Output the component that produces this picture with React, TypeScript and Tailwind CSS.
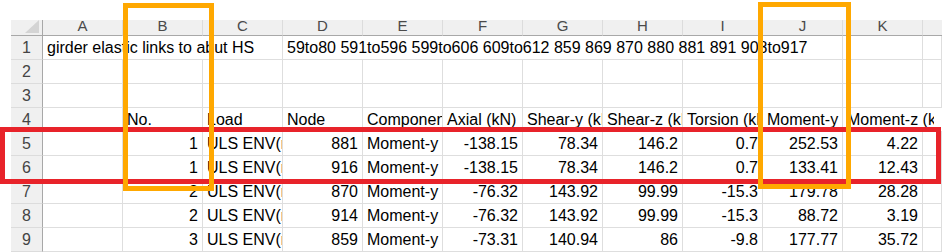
import React from "react";

type Row = {
  num: number;
  cells: (string | null)[];
};

// columns B..K ; numbers right aligned, text left aligned
const dataRows: Row[] = [
  { num: 5, cells: ["1", "ULS ENV(max)", "881", "Moment-y", "-138.15", "78.34", "146.2", "0.7", "252.53", "4.22"] },
  { num: 6, cells: ["1", "ULS ENV(max)", "916", "Moment-y", "-138.15", "78.34", "146.2", "0.7", "133.41", "12.43"] },
  { num: 7, cells: ["2", "ULS ENV(max)", "870", "Moment-y", "-76.32", "143.92", "99.99", "-15.3", "179.78", "28.28"] },
  { num: 8, cells: ["2", "ULS ENV(max)", "914", "Moment-y", "-76.32", "143.92", "99.99", "-15.3", "88.72", "3.19"] },
  { num: 9, cells: ["3", "ULS ENV(max)", "859", "Moment-y", "-73.31", "140.94", "86", "-9.8", "177.77", "35.72"] },
];

const headers = ["No.", "Load", "Node", "Component", "Axial (kN)", "Shear-y (kN)", "Shear-z (kN)", "Torsion (kNm)", "Moment-y (kNm)"];
const letters = ["A", "B", "C", "D", "E", "F", "G", "H", "I", "J", "K"];

const isNumber = (v: string) => /^-?\d+(\.\d+)?$/.test(v);

function RowHead({ n }: { n: number }) {
  return (
    <div className="h-6 bg-[#f0f0f0] border-r border-r-[#a8a8a8] border-b border-b-[#dcdcdc] text-center leading-[24px] text-[16px] text-[#444]">
      {n}
    </div>
  );
}

function Cell({ value, span }: { value?: string | null; span?: string }) {
  const right = value ? isNumber(value) : false;
  return (
    <div
      className={`h-6 border-r border-b border-[#dedede] px-1 leading-[24px] text-[16px] text-black whitespace-nowrap overflow-hidden ${right ? "text-right" : "text-left"} ${span ?? ""}`}
    >
      {value}
    </div>
  );
}

export default function App() {
  return (
    <div className="relative w-[942px] h-[252px] overflow-hidden bg-white font-['Liberation_Sans',Arial,sans-serif]">
      <div className="pl-[11px] pt-[20px]">
        {/* column headers */}
        <div className="grid grid-cols-[32px_repeat(11,80px)_1fr]">
          <div className="relative h-4 bg-[#f0f0f0] border-r border-r-[#a8a8a8] border-b border-b-[#a8a8a8]">
            <svg className="absolute right-[3px] bottom-[2px]" width="14" height="13" viewBox="0 0 14 13">
              <polygon points="14,0 14,13 0,13" fill="#d4d4d4" />
            </svg>
          </div>
          {letters.map((l) => (
            <div
              key={l}
              className="h-4 bg-[#f0f0f0] border-r border-r-[#dcdcdc] border-b border-b-[#a8a8a8] text-center leading-[12px] text-[15px] text-[#4a4a4a]"
            >
              {l}
            </div>
          ))}
          <div className="h-4 bg-[#f0f0f0] border-b border-b-[#a8a8a8]" />
        </div>

        {/* row 1 */}
        <div className="grid grid-cols-[32px_repeat(11,80px)_1fr]">
          <RowHead n={1} />
          <Cell value="girder elastic links to abut HS" span="col-span-3" />
          <Cell value="59to80 591to596 599to606 609to612 859 869 870 880 881 891 908to917" span="col-span-7" />
          <Cell />
          <Cell />
        </div>

        {[2, 3].map((n) => (
          <div key={n} className="grid grid-cols-[32px_repeat(11,80px)_1fr]">
            <RowHead n={n} />
            {letters.map((l) => (
              <Cell key={l} />
            ))}
            <Cell />
          </div>
        ))}

        {/* row 4 : table headers */}
        <div className="grid grid-cols-[32px_repeat(11,80px)_1fr]">
          <RowHead n={4} />
          <Cell />
          {headers.map((h) => (
            <Cell key={h} value={h} />
          ))}
          <div className="h-6 col-span-2 border-b border-[#dedede] pl-1 leading-[24px] text-[16px] whitespace-nowrap overflow-hidden">
            <span className="inline-block w-[87px] overflow-hidden align-top">Moment-z (kNm)</span>
          </div>
        </div>

        {dataRows.map((r) => (
          <div key={r.num} className="grid grid-cols-[32px_repeat(11,80px)_1fr]">
            <RowHead n={r.num} />
            <Cell />
            {r.cells.map((c, i) => (
              <Cell key={i} value={c} />
            ))}
            <Cell />
          </div>
        ))}
      </div>

      {/* highlight boxes */}
      <div className="absolute left-0 top-[127px] w-[941px] h-[57px] border-[5px] border-[#e8232a]" />
      <div className="absolute left-[123px] top-[3px] w-[91px] h-[188px] border-[5px] border-[#ffa800]" />
      <div className="absolute left-[758px] top-[2px] w-[93px] h-[187px] border-[5px] border-[#ffa800]" />
    </div>
  );
}
